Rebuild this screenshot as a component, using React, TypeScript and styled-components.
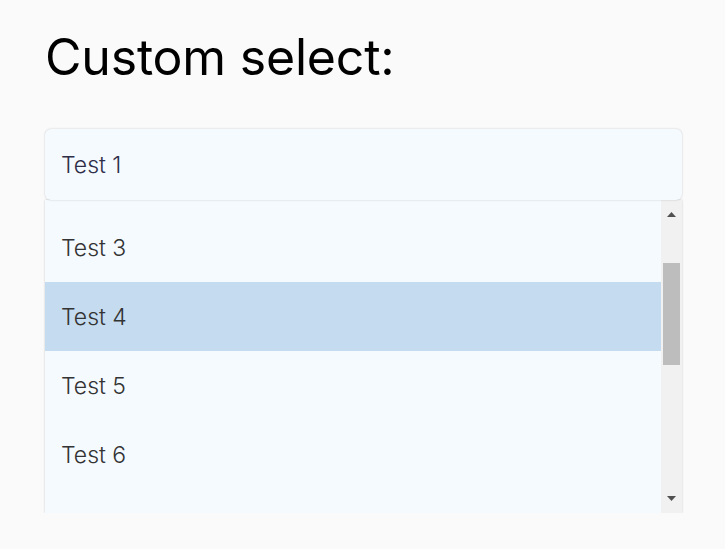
import React, { useEffect, useRef } from "react";
import styled, { createGlobalStyle } from "styled-components";

const GlobalStyle = createGlobalStyle`
  html, body {
    margin: 0;
    padding: 0;
    background: #fafafa;
  }
  body {
    font-family: Inter, "Noto Sans", sans-serif;
  }
`;

const Page = styled.main`
  padding: 26px 43px 0 45px;
`;

const Title = styled.h1`
  margin: 0 0 41px;
  font-size: 50px;
  font-weight: 400;
  line-height: 62px;
  color: #000;
  letter-spacing: -0.2px;
`;

const SelectBox = styled.div`
  width: 637px;
  display: flex;
  flex-direction: column;
`;

const Current = styled.div`
  height: 71px;
  display: flex;
  align-items: center;
  padding-left: 16px;
  box-sizing: border-box;
  background: #f5faff;
  border-radius: 6px;
  box-shadow: 0 0 2px rgba(0, 0, 0, 0.22);
  font-size: 23px;
  font-weight: 300;
  color: #2e2e48;
  position: relative;
  z-index: 1;
`;

const Dropdown = styled.div`
  height: 313px;
  display: flex;
  background: #f5faff;
  box-shadow: 0 0 2px rgba(0, 0, 0, 0.2);
`;

const OptionList = styled.ul`
  flex: 1;
  margin: 0;
  padding: 0;
  list-style: none;
  overflow: hidden;
`;

const Option = styled.li<{ $active?: boolean }>`
  height: 69px;
  display: flex;
  align-items: center;
  padding-left: 16px;
  font-size: 23px;
  font-weight: 300;
  color: #333;
  background: ${(p) => (p.$active ? "#c5dcf0" : "transparent")};
`;

const Scrollbar = styled.div`
  width: 21px;
  display: flex;
  flex-direction: column;
  background: #f1f1f1;
`;

const ArrowButton = styled.div`
  height: 17px;
  display: flex;
  align-items: center;
  justify-content: center;
`;

const Track = styled.div`
  flex: 1;
  display: flex;
  flex-direction: column;
  padding: 0 2px;
`;

const Thumb = styled.div`
  height: 102px;
  background: #bdbdbd;
`;

const options = Array.from({ length: 12 }, (_, i) => `Test ${i + 1}`);

const App = () => {
  const listRef = useRef<HTMLUListElement>(null);

  useEffect(() => {
    // Test 3 sits 13px below the top edge
    if (listRef.current) listRef.current.scrollTop = 125;
  }, []);

  return (
    <>
      <GlobalStyle />
      <Page>
        <Title>Custom select:</Title>
        <SelectBox>
          <Current>Test 1</Current>
          <Dropdown>
            <OptionList ref={listRef}>
              {options.map((o) => (
                <Option key={o} $active={o === "Test 4"}>
                  {o}
                </Option>
              ))}
            </OptionList>
            <Scrollbar>
              <ArrowButton style={{ paddingTop: 6 }}>
                <svg width="9" height="5" viewBox="0 0 9 5">
                  <path d="M0 5 L4.5 0 L9 5 Z" fill="#505050" />
                </svg>
              </ArrowButton>
              <Track>
                <Thumb style={{ marginTop: 40 }} />
              </Track>
              <ArrowButton style={{ paddingBottom: 6 }}>
                <svg width="9" height="5" viewBox="0 0 9 5">
                  <path d="M0 0 L9 0 L4.5 5 Z" fill="#505050" />
                </svg>
              </ArrowButton>
            </Scrollbar>
          </Dropdown>
        </SelectBox>
      </Page>
    </>
  );
};

export default App;
